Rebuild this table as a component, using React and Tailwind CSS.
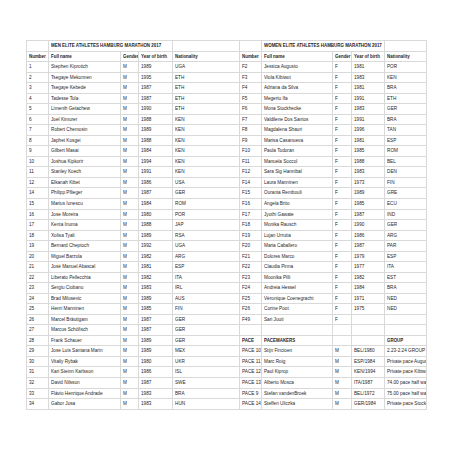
import React from 'react';

const men = [
    ['1', 'Stephen Kiprotich', 'M', '1989', 'UGA'],
    ['2', 'Tsegaye Mekonnen', 'M', '1995', 'ETH'],
    ['3', 'Tsegaye Kebede', 'M', '1987', 'ETH'],
    ['4', 'Tadesse Tola', 'M', '1987', 'ETH'],
    ['5', 'Limenih Getachew', 'M', '1990', 'ETH'],
    ['6', 'Joel Kimurer', 'M', '1988', 'KEN'],
    ['7', 'Robert Chemosin', 'M', '1989', 'KEN'],
    ['8', 'Japhet Kosgei', 'M', '1988', 'KEN'],
    ['9', 'Gilbert Masai', 'M', '1984', 'KEN'],
    ['10', 'Joshua Kipkorir', 'M', '1994', 'KEN'],
    ['11', 'Stanley Koech', 'M', '1991', 'KEN'],
    ['12', 'Elkanah Kibet', 'M', '1986', 'USA'],
    ['14', 'Philipp Pflieger', 'M', '1987', 'GER'],
    ['15', 'Marius Ionescu', 'M', '1984', 'ROM'],
    ['16', 'Jose Moreira', 'M', '1980', 'POR'],
    ['17', 'Kenta Inuma', 'M', '1988', 'JAP'],
    ['18', 'Xolisa Tyali', 'M', '1989', 'RSA'],
    ['19', 'Bernard Cheptoch', 'M', '1992', 'UGA'],
    ['20', 'Miguel Barzola', 'M', '1982', 'ARG'],
    ['21', 'José Manuel Abascal', 'M', '1981', 'ESP'],
    ['22', 'Liberato Pellecchia', 'M', '1982', 'ITA'],
    ['23', 'Sergiu Ciobanu', 'M', '1983', 'IRL'],
    ['24', 'Brad Milosevic', 'M', '1989', 'AUS'],
    ['25', 'Henri Manninen', 'M', '1985', 'FIN'],
    ['26', 'Marcel Bräutigam', 'M', '1987', 'GER'],
    ['27', 'Marcus Schöfisch', 'M', '1987', 'GER'],
    ['28', 'Frank Schauer', 'M', '1989', 'GER'],
    ['29', 'Jose Luis Santana Marin', 'M', '1989', 'MEX'],
    ['30', 'Vitaliy Rybak', 'M', '1980', 'UKR'],
    ['31', 'Kari Steinn Karlsson', 'M', '1986', 'ISL'],
    ['32', 'David Nilsson', 'M', '1987', 'SWE'],
    ['33', 'Flávio Henrique Andrade', 'M', '1983', 'BRA'],
    ['34', 'Gabor Josa', 'M', '1983', 'HUN'],
];

const women = [
    ['F2', 'Jessica Augusto', 'F', '1981', 'POR'],
    ['F3', 'Viola Kibiwot', 'F', '1983', 'KEN'],
    ['F4', 'Adriana da Silva', 'F', '1981', 'BRA'],
    ['F5', 'Megertu Ifa', 'F', '1991', 'ETH'],
    ['F6', 'Mona Stockhecke', 'F', '1983', 'GER'],
    ['F7', 'Valdilene Dos Santos', 'F', '1991', 'BRA'],
    ['F8', 'Magdalena Shauri', 'F', '1996', 'TAN'],
    ['F9', 'Marisa Casanueva', 'F', '1981', 'ESP'],
    ['F10', 'Paula Todoran', 'F', '1985', 'ROM'],
    ['F11', 'Manuela Soccol', 'F', '1988', 'BEL'],
    ['F12', 'Sara Sig Hannibal', 'F', '1983', 'DEN'],
    ['F14', 'Laura Manninen', 'F', '1973', 'FIN'],
    ['F15', 'Ourania Rembouli', 'F', '1989', 'GRE'],
    ['F16', 'Angela Brito', 'F', '1985', 'ECU'],
    ['F17', 'Jyothi Gawate', 'F', '1987', 'IND'],
    ['F18', 'Monika Rausch', 'F', '1990', 'GER'],
    ['F19', 'Lujan Urrutia', 'F', '1986', 'ARG'],
    ['F20', 'Maria Caballero', 'F', '1987', 'PAR'],
    ['F21', 'Dolores Marco', 'F', '1979', 'ESP'],
    ['F22', 'Claudia Pinna', 'F', '1977', 'ITA'],
    ['F23', 'Moonika Pilli', 'F', '1982', 'EST'],
    ['F24', 'Andreia Hessel', 'F', '1984', 'BRA'],
    ['F25', 'Véronique Coenegracht', 'F', '1971', 'NED'],
    ['F26', 'Corine Poot', 'F', '1975', 'NED'],
    ['F49', 'Sari Juuti', 'F', '', ''],
    ['', '', '', '', ''],
    ['PACE', 'PACEMAKERS', '', '', 'GROUP', true],
    ['PACE 10', 'Stijn Fincioen', 'M', 'BEL/1980', '2.23-2.24 GROUP'],
    ['PACE 11', 'Marc Roig', 'M', 'ESP/1984', 'Private pace Augusto'],
    ['PACE 12', 'Paul Kiprop', 'M', 'KEN/1994', 'Private pace Kibiwot'],
    ['PACE 13', 'Alberto Mosca', 'M', 'ITA/1987', '74.00 pace half way'],
    ['PACE 9', 'Stefan vandenBroek', 'M', 'BEL/1972', '75.00 pace half way'],
    ['PACE 14', 'Steffen Uliczka', 'M', 'GER/1984', 'Private pace Stockhecke'],
];

const headers = ['Number', 'Full name', 'Gender', 'Year of birth', 'Nationality'];

// the sheet is squeezed sideways, so each cell's text is narrowed with scale-x
const Cell = ({ children, bold, span }) => (
    <div className={`border-r border-b border-[#d9d9d9] overflow-hidden whitespace-nowrap pl-[2px] text-[6px] leading-[9px] ${bold ? 'font-bold' : ''} ${span ? 'col-span-3' : ''}`}>
        {children && (
            <span className={`inline-block origin-left ${bold ? 'scale-x-[0.74]' : 'scale-x-[0.78]'}`}>{children}</span>
        )}
    </div>
);

const App = () => {
    return (
        <div className="w-[452px] h-[452px] bg-white pt-[40px] pl-[26px] text-[#262626] font-['Liberation_Sans',Arial,sans-serif]">
            <div className="grid w-fit grid-cols-[22px_72px_18px_34px_67px_22px_71px_19px_33px_42px] auto-rows-[10.54px] border-l border-t border-[#d9d9d9]">
                <Cell />
                <Cell bold span>MEN ELITE ATHLETES HAMBURG MARATHON 2017</Cell>
                <Cell />
                <Cell />
                <Cell bold span>WOMEN ELITE ATHLETES HAMBURG MARATHON 2017</Cell>
                <Cell />

                {headers.map((h) => <Cell key={'m' + h} bold>{h}</Cell>)}
                {headers.map((h) => <Cell key={'w' + h} bold>{h}</Cell>)}

                {men.map((m, i) => {
                    const w = women[i];
                    return (
                        <React.Fragment key={i}>
                            {m.map((v, j) => <Cell key={'m' + j}>{v}</Cell>)}
                            {w.slice(0, 5).map((v, j) => <Cell key={'w' + j} bold={w[5]}>{v}</Cell>)}
                        </React.Fragment>
                    );
                })}
            </div>
        </div>
    );
};

export default App;
